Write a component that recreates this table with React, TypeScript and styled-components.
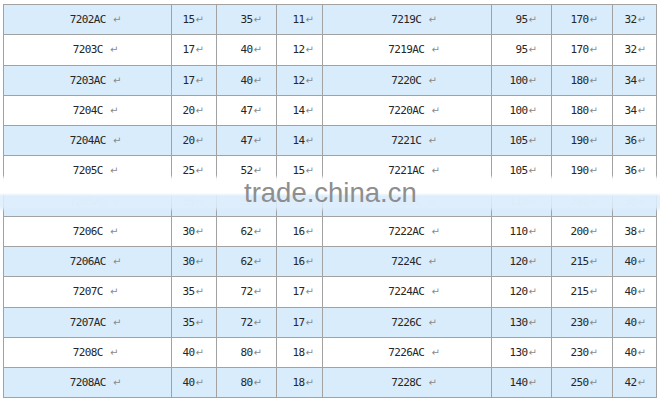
import React from "react";
import styled, { createGlobalStyle } from "styled-components";

const Global = createGlobalStyle`
  html, body { margin: 0; padding: 0; background: #ffffff; }
  body { width: 660px; height: 401px; overflow: hidden; }
`;

const Page = styled.div`
  padding: 4px 3px 0 3px;
  font-family: "DejaVu Sans Mono", "Liberation Mono", monospace;
`;

const Table = styled.div`
  position: relative;
  width: 654px;
  display: flex;
  flex-direction: column;
  border-top: 1px solid #a2a2a2;
  border-left: 1px solid #a2a2a2;
  box-sizing: border-box;
`;

const Row = styled.div<{ $blue: boolean; $faded?: boolean }>`
  display: grid;
  grid-template-columns: 168px 45px 60px 46px 169px 60px 61px 44px;
  height: 30.25px;
  background: ${(p) => (p.$blue ? "#d9ecfb" : "#ffffff")};
  color: ${(p) => (p.$faded ? "#cfdbe6" : "#262626")};
`;

const Cell = styled.div<{ $pad: number; $name?: boolean }>`
  box-sizing: border-box;
  border-right: 1px solid #a2a2a2;
  border-bottom: 1px solid #a2a2a2;
  display: flex;
  align-items: center;
  justify-content: ${(p) => (p.$name ? "center" : "flex-end")};
  padding-left: ${(p) => (p.$name ? p.$pad : 0)}px;
  padding-right: ${(p) => (p.$name ? 0 : p.$pad)}px;
  font-size: 11px;
  letter-spacing: -0.6px;
  white-space: pre;
`;

const Mark = styled.span<{ $faded?: boolean }>`
  color: ${(p) => (p.$faded ? "#d6e0ea" : "#8a8a8a")};
  font-family: "DejaVu Sans", sans-serif;
  font-size: 10px;
  letter-spacing: 0;
  margin-left: 1px;
`;

const Band = styled.div`
  position: absolute;
  left: -4px;
  right: -4px;
  top: 170px;
  height: 40px;
  pointer-events: none;
  background: linear-gradient(
    to bottom,
    rgba(255, 255, 255, 0) 0px,
    rgba(255, 255, 255, 0.95) 4px,
    #ffffff 7px,
    #ffffff 18px,
    rgba(222, 238, 252, 0.9) 21px,
    rgba(222, 238, 252, 0.85) 32px,
    rgba(222, 238, 252, 0) 37px
  );
`;

const Watermark = styled.div`
  position: absolute;
  left: 240px;
  top: 174px;
  font-family: "Liberation Sans", Arial, sans-serif;
  font-size: 27.5px;
  line-height: 27.5px;
  color: #8e8e8e;
  pointer-events: none;
`;

type Rec = [string, number, number, number];

const left: Rec[] = [
  ["7202AC", 15, 35, 11],
  ["7203C", 17, 40, 12],
  ["7203AC", 17, 40, 12],
  ["7204C", 20, 47, 14],
  ["7204AC", 20, 47, 14],
  ["7205C", 25, 52, 15],
  ["7205AC", 25, 52, 15],
  ["7206C", 30, 62, 16],
  ["7206AC", 30, 62, 16],
  ["7207C", 35, 72, 17],
  ["7207AC", 35, 72, 17],
  ["7208C", 40, 80, 18],
  ["7208AC", 40, 80, 18],
];

const right: Rec[] = [
  ["7219C", 95, 170, 32],
  ["7219AC", 95, 170, 32],
  ["7220C", 100, 180, 34],
  ["7220AC", 100, 180, 34],
  ["7221C", 105, 190, 36],
  ["7221AC", 105, 190, 36],
  ["7222C", 110, 200, 38],
  ["7222AC", 110, 200, 38],
  ["7224C", 120, 215, 40],
  ["7224AC", 120, 215, 40],
  ["7226C", 130, 230, 40],
  ["7226AC", 130, 230, 40],
  ["7228C", 140, 250, 42],
];

const pads = [16, 12, 14, 8, 14, 14, 14, 10];

export default function App() {
  return (
    <>
      <Global />
      <Page>
        <Table>
          {left.map((l, i) => {
            const r = right[i];
            const vals: (string | number)[] = [l[0], l[1], l[2], l[3], r[0], r[1], r[2], r[3]];
            const faded = i === 6;
            return (
              <Row key={i} $blue={i % 2 === 0} $faded={faded}>
                {vals.map((v, j) => {
                  const isName = j === 0 || j === 4;
                  return (
                    <Cell key={j} $pad={pads[j]} $name={isName}>
                      {isName ? `${v} ` : `${v}`}
                      <Mark $faded={faded}>↵</Mark>
                    </Cell>
                  );
                })}
              </Row>
            );
          })}
          <Band />
          <Watermark>trade.china.cn</Watermark>
        </Table>
      </Page>
    </>
  );
}
